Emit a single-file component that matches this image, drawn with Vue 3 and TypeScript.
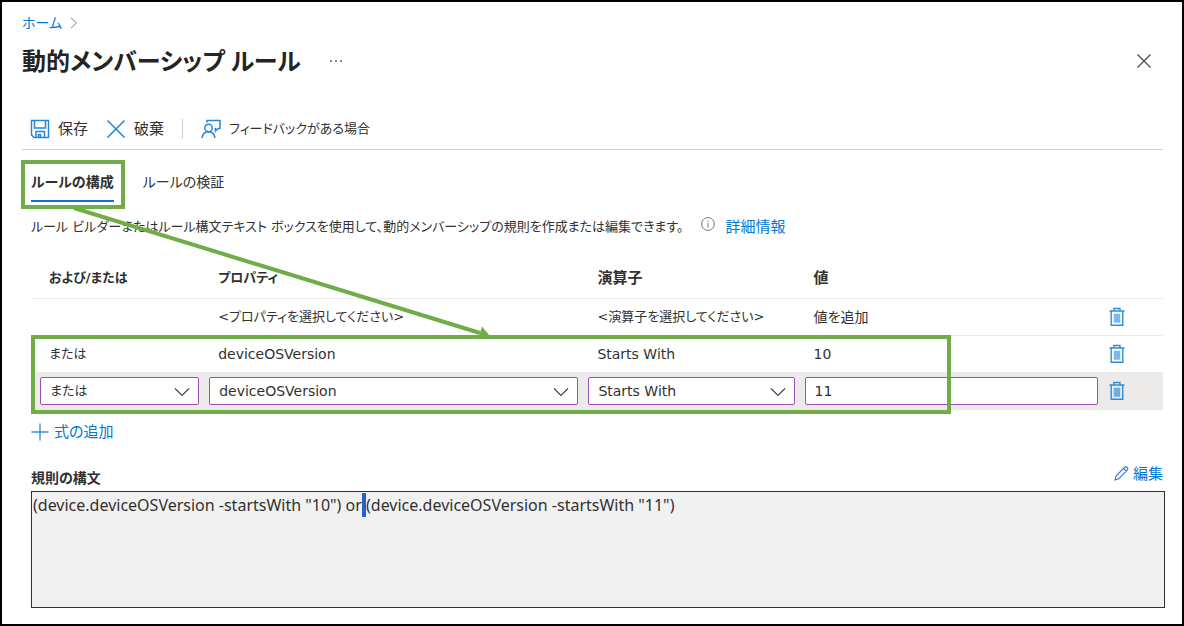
<script setup lang="ts">
import { onMounted, ref } from 'vue'

interface Expression {
  join: string
  property: string
  operator: string
  value: string
}

const expressions: Expression[] = [
  { join: '', property: '<プロパティを選択してください>', operator: '<演算子を選択してください>', value: '値を追加' },
  { join: 'または', property: 'deviceOSVersion', operator: 'Starts With', value: '10' },
]

const join = ref('または')
const property = ref('deviceOSVersion')
const operator = ref('Starts With')
const value = ref('11')
const syntax = ref('(device.deviceOSVersion -startsWith "10") or (device.deviceOSVersion -startsWith "11")')
const syntaxBox = ref<HTMLTextAreaElement | null>(null)

// Placeholders and kana labels are set one step smaller than the rest
const isSmall = (text: string) => /^[<ぁ-ヿ]/.test(text)

onMounted(() => {
  // Select the space that follows the "or" between the two expressions
  const at = syntax.value.indexOf(' or ') + 3
  syntaxBox.value?.focus({ preventScroll: true })
  syntaxBox.value?.setSelectionRange(at, at + 1)
})
</script>

<template>
  <main class="page">
    <nav class="breadcrumb">
      <a href="#">ホーム</a>
      <svg width="8" height="12" viewBox="0 0 8 12" fill="none" stroke="#8a8886"><path d="M1 1l5.5 5L1 11" /></svg>
    </nav>

    <header class="heading">
      <h1>動的メンバーシップ ルール</h1>
      <button class="plain more" aria-label="その他">
        <svg width="14" height="4" viewBox="0 0 14 4" fill="#605e5c"><circle cx="2" cy="2" r="1" /><circle cx="7" cy="2" r="1" /><circle cx="12" cy="2" r="1" /></svg>
      </button>
      <button class="plain close" aria-label="閉じる">
        <svg width="16" height="16" viewBox="0 0 16 16" fill="none" stroke="#484644" stroke-width="1.2"><path d="M1.5 1.5l13 13M14.5 1.5l-13 13" /></svg>
      </button>
    </header>

    <div class="toolbar">
      <button class="plain">
        <svg width="20" height="20" viewBox="0 0 20 20" fill="none" stroke="#2488d8" stroke-width="1.5"><path d="M1.5 1.5h17v17H4l-2.500-2.500zM4.500 1.500v7.500h11V1.500M6 18.500v-6h8.500v6M8.500 18.500v-3h2v3" /></svg>
        <span>保存</span>
      </button>
      <button class="plain">
        <svg width="20" height="20" viewBox="0 0 20 20" fill="none" stroke="#2488d8" stroke-width="1.6"><path d="M1.500 1.500l17 17M18.500 1.500l-17 17" /></svg>
        <span>破棄</span>
      </button>
      <i class="divider"></i>
      <button class="plain small">
        <svg width="20" height="20" viewBox="0 0 20 20" fill="none" stroke="#2488d8" stroke-width="1.5"><circle cx="7.500" cy="9" r="3.800" /><path d="M1 19c.6-4 3-6.200 6.500-6.200S13.400 15 14 19M6 3.500V1.500h13v8h-2l-2.500 2.500V9.500h-1" /></svg>
        <span>フィードバックがある場合</span>
      </button>
    </div>

    <div class="content">
      <div class="tabs" role="tablist">
        <div class="marked">
          <button class="plain tab active" role="tab" aria-selected="true">ルールの構成</button>
          <i class="mark tab-mark"></i>
        </div>
        <button class="plain tab" role="tab" aria-selected="false">ルールの検証</button>
      </div>

      <p class="description">
        <span class="small">ルール ビルダーまたはルール構文テキスト ボックスを使用して、動的メンバーシップの規則を作成または編集できます。</span>
        <svg class="info" width="14" height="14" viewBox="0 0 14 14" fill="none" stroke="#797775"><circle cx="7" cy="7" r="6.400" /><path d="M7 6v4.500M7 3.500v1.300" /></svg>
        <a href="#">詳細情報</a>
      </p>

      <div class="builder">
        <table>
          <colgroup><col class="c1" /><col class="c2" /><col class="c3" /><col class="c4" /><col class="c5" /></colgroup>
          <thead>
            <tr><th class="small">および/または</th><th class="small">プロパティ</th><th>演算子</th><th>値</th><th></th></tr>
          </thead>
          <tbody>
            <tr v-for="(row, i) in expressions" :key="i">
              <td :class="{ small: isSmall(row.join) }">{{ row.join }}</td>
              <td :class="{ small: isSmall(row.property) }">{{ row.property }}</td>
              <td :class="{ small: isSmall(row.operator) }">{{ row.operator }}</td>
              <td>{{ row.value }}</td>
              <td class="action">
                <button class="plain" aria-label="削除">
                  <svg width="16" height="20" viewBox="0 0 16 20" fill="none" stroke="#2b8fdd" stroke-width="1.400"><path d="M.5 4h15M5 3.500V1.500h6v2M2.200 4v14.200h11.600V4" /><path d="M5 7h6v8.500H5z" fill="#7cb9ea" stroke="#7cb9ea" stroke-width=".5" /></svg>
                </button>
              </td>
            </tr>
            <tr class="editing">
              <td>
                <div class="field small">
                  <select v-model="join" aria-label="および/または"><option>または</option><option>および</option></select>
                  <svg width="16" height="10" viewBox="0 0 16 10" fill="none" stroke="#484644" stroke-width="1.200"><path d="M1 1.500l7 7 7-7" /></svg>
                </div>
              </td>
              <td>
                <div class="field">
                  <select v-model="property" aria-label="プロパティ"><option>deviceOSVersion</option></select>
                  <svg width="16" height="10" viewBox="0 0 16 10" fill="none" stroke="#484644" stroke-width="1.200"><path d="M1 1.500l7 7 7-7" /></svg>
                </div>
              </td>
              <td>
                <div class="field">
                  <select v-model="operator" aria-label="演算子"><option>Starts With</option></select>
                  <svg width="16" height="10" viewBox="0 0 16 10" fill="none" stroke="#484644" stroke-width="1.200"><path d="M1 1.500l7 7 7-7" /></svg>
                </div>
              </td>
              <td><div class="field"><input v-model="value" type="text" aria-label="値" /></div></td>
              <td class="action">
                <button class="plain" aria-label="削除">
                  <svg width="16" height="20" viewBox="0 0 16 20" fill="none" stroke="#2b8fdd" stroke-width="1.400"><path d="M.5 4h15M5 3.500V1.500h6v2M2.200 4v14.200h11.600V4" /><path d="M5 7h6v8.500H5z" fill="#70ade0" stroke="#70ade0" stroke-width=".5" /></svg>
                </button>
              </td>
            </tr>
          </tbody>
        </table>
        <i class="mark rows-mark"></i>
        <svg class="arrow" width="460" height="136" viewBox="0 0 460 136"><path d="M43 1L449 126" stroke="#70ad47" stroke-width="4" /><path d="M458.500 128.500L451 119.500L447 132.500z" fill="#70ad47" /></svg>
      </div>

      <button class="plain add">
        <svg width="18" height="18" viewBox="0 0 18 18" fill="none" stroke="#3a86dc" stroke-width="1.300"><path d="M9 .5v17M.5 9h17" /></svg>
        <span>式の追加</span>
      </button>

      <div class="syntax-head">
        <label for="syntax">規則の構文</label>
        <button class="plain edit">
          <svg width="15" height="15" viewBox="0 0 15 15" fill="none" stroke="#2f72d8" stroke-width="1.100"><path d="M1 14l1-4L10.800 1.200q1.100-.9 2.300.3t.4 2.300L4.800 12.800zM9.500 2.500l3 3" /></svg>
          <span>編集</span>
        </button>
      </div>
      <textarea id="syntax" ref="syntaxBox" v-model="syntax" readonly spellcheck="false"></textarea>
    </div>
  </main>
</template>

<style>
body {
  margin: 0;
}
</style>

<style scoped>
* {
  box-sizing: border-box;
}
.page {
  min-height: 100vh;
  padding: 11px 17px 16px 20px;
  border: 2px solid #000;
  background: #fff;
  color: #323130;
  font: 15px/20px "DejaVu Sans", "Noto Sans CJK JP", sans-serif;
  font-feature-settings: "palt";
}
svg {
  display: block;
  flex: none;
}
a {
  color: #0078d4;
  text-decoration: none;
}
.plain {
  display: flex;
  align-items: center;
  gap: 8px;
  padding: 0;
  border: 0;
  background: none;
  color: inherit;
  font: inherit;
  font-feature-settings: inherit;
  white-space: nowrap;
}
.breadcrumb {
  display: flex;
  align-items: center;
  gap: 8px;
  font-size: 14px;
}
.heading {
  display: flex;
  align-items: center;
  height: 56px;
}
h1 {
  margin: 0;
  color: #252423;
  font-family: "Noto Sans", "Noto Sans CJK JP", sans-serif;
  font-size: 24px;
  line-height: 36px;
  font-weight: 700;
}
.more {
  margin-left: 28px;
}
.close {
  margin: 0 13px 0 auto;
}
.toolbar {
  display: flex;
  align-items: center;
  gap: 18px;
  height: 61px;
  margin-right: 2px;
  padding: 19px 8px 0;
  border-bottom: 1px solid #d2d0ce;
}
.divider {
  width: 1px;
  height: 20px;
  background: #d2d0ce;
}
.content {
  padding-left: 9px;
}
.tabs {
  display: flex;
  gap: 29px;
  padding-top: 17px;
}
.marked {
  position: relative;
}
.tab {
  height: 35px;
  padding-bottom: 3px;
  border-bottom: 2px solid transparent;
  font-size: 14px;
}
.active {
  border-color: #0f6cd4;
  font-weight: 700;
}
.mark {
  position: absolute;
  border: 4px solid #70ad47;
  pointer-events: none;
}
.tab-mark {
  inset: -7px -11px -7px -10px;
}
.description {
  display: flex;
  align-items: center;
  gap: 10px;
  margin: 15px 0 0;
  white-space: nowrap;
}
.info {
  margin: 0 0 6px 8px;
}
.builder {
  position: relative;
  margin: 21px 2px 0 0;
}
table {
  width: 100%;
  border-collapse: collapse;
  table-layout: fixed;
}
.c1 { width: 15.3%; }
.c2 { width: 33.5%; }
.c3 { width: 19.1%; }
.c4 { width: 26.8%; }
.c5 { width: 5.3%; }
th,
td {
  height: 37px;
  padding: 0 5px 0 14px;
  border-bottom: 1px solid #edebe9;
  font-size: 14px;
  text-align: left;
  white-space: nowrap;
}
th:first-child,
td:first-child {
  padding-left: 18px;
}
th {
  height: 40px;
  font-size: 15px;
}
.editing td {
  padding-left: 5px;
  background: #edebe9;
}
.editing td:first-child {
  padding-left: 9px;
}
.editing td.action,
td.action {
  padding-left: 6px;
}
.small,
th.small,
td.small {
  font-size: 13px;
}
.field {
  position: relative;
}
.field svg {
  position: absolute;
  right: 9px;
  top: 10px;
  pointer-events: none;
}
select,
input {
  display: block;
  width: 100%;
  height: 28px;
  padding: 0 9px;
  border: 1px solid #9b4fb0;
  border-radius: 2px;
  outline: 0;
  appearance: none;
  background: #fff;
  color: inherit;
  font: inherit;
  font-feature-settings: inherit;
}
.rows-mark {
  left: 0;
  bottom: -4px;
  width: 81.3%;
  height: 79px;
}
.arrow {
  position: absolute;
  left: 0;
  top: -51px;
  pointer-events: none;
}
.add {
  gap: 5px;
  margin-top: 12px;
  color: #0078d4;
}
.syntax-head {
  display: flex;
  justify-content: space-between;
  margin: 22px 2px 0 0;
  height: 27px;
}
.syntax-head label {
  padding-top: 4px;
  font-size: 14px;
  font-weight: 700;
}
.edit {
  gap: 4px;
  height: 20px;
  color: #0078d4;
}
textarea {
  display: block;
  width: 100%;
  height: 117px;
  padding: 1px;
  border: 1px solid #323130;
  outline: 0;
  resize: none;
  background: #f1f1f1;
  color: inherit;
  font: 16px/24px "Noto Sans", "Noto Sans CJK JP", sans-serif;
}
textarea::selection {
  background: #2b5fd0;
}
</style>
